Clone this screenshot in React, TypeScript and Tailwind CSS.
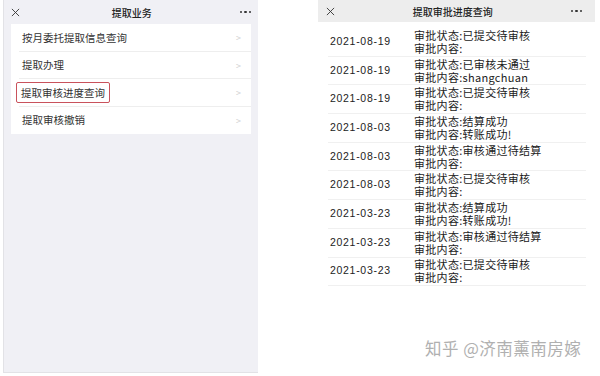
import React from "react";

const font = { fontFamily: '"Noto Sans CJK SC", "Noto Sans", sans-serif' };
const latin = { fontFamily: '"Liberation Sans", "Noto Sans CJK SC", sans-serif' };

function XIcon({ className }: { className?: string }) {
  return (
    <svg viewBox="0 0 10 10" className={className} fill="none" stroke="#333" strokeWidth="1">
      <path d="M1 1 L9 9 M9 1 L1 9" />
    </svg>
  );
}

function Dots() {
  return (
    <div className="flex gap-[2px]">
      <span className="w-[2.5px] h-[2.5px] bg-[#333] rounded-full" />
      <span className="w-[2.5px] h-[2.5px] bg-[#333] rounded-full" />
      <span className="w-[2.5px] h-[2.5px] bg-[#333] rounded-full" />
    </div>
  );
}

const leftItems = ["按月委托提取信息查询", "提取办理", "提取审核进度查询", "提取审核撤销"];

const rows = [
  ["2021-08-19", "审批状态:已提交待审核", "审批内容:"],
  ["2021-08-19", "审批状态:已审核未通过", "审批内容:shangchuan"],
  ["2021-08-19", "审批状态:已提交待审核", "审批内容:"],
  ["2021-08-03", "审批状态:结算成功", "审批内容:转账成功!"],
  ["2021-08-03", "审批状态:审核通过待结算", "审批内容:"],
  ["2021-08-03", "审批状态:已提交待审核", "审批内容:"],
  ["2021-03-23", "审批状态:结算成功", "审批内容:转账成功!"],
  ["2021-03-23", "审批状态:审核通过待结算", "审批内容:"],
  ["2021-03-23", "审批状态:已提交待审核", "审批内容:"],
];

export default function App() {
  return (
    <div className="w-[600px] h-[376px] bg-white flex overflow-hidden text-[#222]" style={font}>
      {/* Left phone */}
      <div className="ml-[3px] w-[255px] h-[373px] bg-[#f0f0f5] border-l border-[#e2e2e6] border-b flex flex-col">
        <div className="h-[22px] flex items-center justify-between px-[7px] pt-[2px]">
          <XIcon className="w-[9px] h-[9px]" />
          <span className="text-[10px] font-medium ml-[4px]">提取业务</span>
          <Dots />
        </div>
        <div className="mx-[7px] mt-[2px] bg-white flex flex-col">
          {leftItems.map((t, i) => (
            <div key={t} className="h-[27.5px] flex items-center justify-between pl-[11px] pr-[10px] relative">
              {i === 2 ? (
                <span className="text-[10.5px] leading-[13px] text-[#333] border-[1.5px] border-[#c9525c] rounded-[2px] px-[4px] py-[3px] -ml-[6px]">
                  {t}
                </span>
              ) : (
                <span className="text-[10.5px] text-[#333]">{t}</span>
              )}
              <span className="text-[9px] text-[#d0d0d0]">&gt;</span>
              {i < leftItems.length - 1 && (
                <div className="absolute bottom-0 left-[8px] right-0 h-px bg-[#eeeeee]" />
              )}
            </div>
          ))}
        </div>
      </div>

      {/* Right phone */}
      <div className="ml-[60px] w-[277px] h-[376px] bg-white flex flex-col relative">
        <div className="h-[22px] bg-[#ededed] flex items-center justify-between px-[8px] pr-[13px]">
          <XIcon className="w-[9px] h-[9px]" />
          <span className="text-[10px] font-medium">提取审批进度查询</span>
          <Dots />
        </div>
        <div className="flex flex-col mt-[6px] px-[10px] pr-[9px]">
          {rows.map(([d, a, b], i) => (
            <div key={i} className="h-[28.7px] flex items-center border-b border-[#f0f0f0]">
              <span className="w-[86px] text-[10.5px] tracking-[0.7px] pl-[2px]" style={latin}>
                {d}
              </span>
              <div className="flex flex-col leading-[13px] text-[11px] tracking-[0.3px]">
                <span>{a}</span>
                <span>{b}</span>
              </div>
            </div>
          ))}
        </div>
        <div className="absolute left-[107px] top-[338px] text-[16.5px] leading-[20px] text-[#b0b0b0] tracking-[0.5px]">
          知乎 @济南薰南房嫁
        </div>
      </div>
    </div>
  );
}
